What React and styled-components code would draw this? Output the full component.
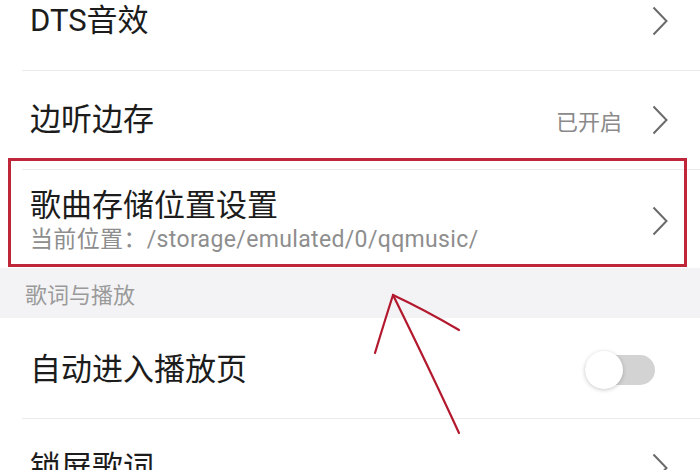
import React from "react";
import styled, { createGlobalStyle } from "styled-components";

const GlobalStyle = createGlobalStyle`
  html, body {
    margin: 0;
    padding: 0;
    background: #ffffff;
  }
  body {
    font-family: Roboto, "Noto Sans CJK SC", sans-serif;
    color: #1c1c1c;
  }
`;

const Screen = styled.div`
  position: relative;
  width: 700px;
  height: 470px;
  overflow: hidden;
  background: #fff;
`;

const List = styled.div`
  display: flex;
  flex-direction: column;
  margin-top: -28px;
`;

const Row = styled.div`
  display: flex;
  align-items: center;
  height: ${(p) => p.$h || 98}px;
  padding: ${(p) => p.$top || 0}px 32px 0 30px;
  box-sizing: border-box;
`;

const TextCol = styled.div`
  flex: 1;
  display: flex;
  flex-direction: column;
  min-width: 0;
`;

const Title = styled.div`
  font-size: 31px;
  line-height: 36px;
  color: #1c1c1c;
`;

const Sub = styled.div`
  font-size: 23px;
  line-height: 28px;
  letter-spacing: 0.35px;
  color: #8e8e8e;
  margin-top: 2px;
`;

const Value = styled.span`
  font-size: 22px;
  color: #8a8a8a;
  margin-right: 30px;
`;

const Divider = styled.div`
  height: 1px;
  margin-left: 22px;
  background: #ebebeb;
`;

const Section = styled.div`
  height: 50px;
  display: flex;
  align-items: center;
  padding-left: 25px;
  background: #f3f3f5;
  font-size: 22px;
  color: #9a9a9a;
`;

const Track = styled.div`
  position: relative;
  width: 70px;
  height: 30px;
  margin-right: 13px;
  border-radius: 15px;
  background: #d3d3d3;
`;

const Knob = styled.div`
  position: absolute;
  left: 0;
  top: 50%;
  width: 38px;
  height: 38px;
  margin-top: -19px;
  border-radius: 50%;
  background: #fff;
  box-shadow: 0 1px 4px rgba(0, 0, 0, 0.22);
`;

const Annotation = styled.svg`
  position: absolute;
  left: 0;
  top: 0;
  pointer-events: none;
`;

const Chevron = () => (
  <svg width="16" height="30" viewBox="0 0 16 30" fill="none">
    <path d="M1.5 1.5 L14.5 15 L1.5 28.5" stroke="#6a6a6a" strokeWidth="2" />
  </svg>
);

const Toggle = () => (
  <Track>
    <Knob />
  </Track>
);

export default function App() {
  return (
    <Screen>
      <GlobalStyle />
      <List>
        <Row>
          <TextCol>
            <Title>DTS音效</Title>
          </TextCol>
          <Chevron />
        </Row>
        <Divider />
        <Row>
          <TextCol>
            <Title>边听边存</Title>
          </TextCol>
          <Value>已开启</Value>
          <Chevron />
        </Row>
        <Divider />
        <Row $top={4}>
          <TextCol>
            <Title>歌曲存储位置设置</Title>
            <Sub>当前位置：/storage/emulated/0/qqmusic/</Sub>
          </TextCol>
          <Chevron />
        </Row>
        <Section>歌词与播放</Section>
        <Row $h={100} $top={4}>
          <TextCol>
            <Title>自动进入播放页</Title>
          </TextCol>
          <Toggle />
        </Row>
        <Divider />
        <Row>
          <TextCol>
            <Title>锁屏歌词</Title>
          </TextCol>
          <Chevron />
        </Row>
      </List>
      <Annotation width="700" height="470" viewBox="0 0 700 470">
        <rect x="9.5" y="159.5" width="676" height="106" fill="none" stroke="#c0263a" strokeWidth="3" />
        <g stroke="#b3192e" strokeWidth="2.2" fill="none" strokeLinecap="round">
          <path d="M459 433 Q430 370 393 295" />
          <path d="M393 295 Q385 320 375 353" />
          <path d="M393 295 Q425 310 459 330" />
        </g>
      </Annotation>
    </Screen>
  );
}
